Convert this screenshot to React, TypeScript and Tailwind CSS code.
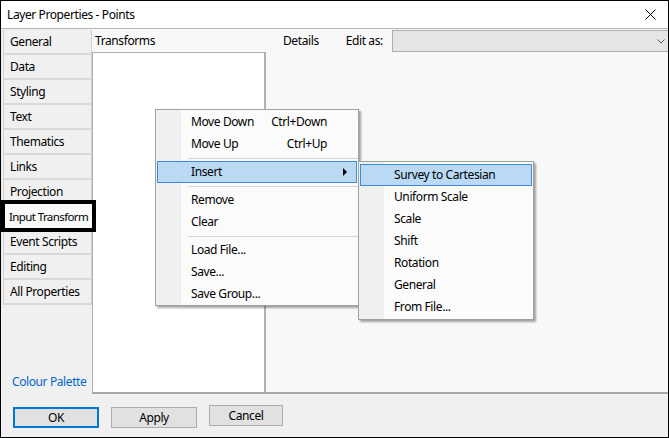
const tabs = [
  'General',
  'Data',
  'Styling',
  'Text',
  'Thematics',
  'Links',
  'Projection',
  'Input Transform',
  'Event Scripts',
  'Editing',
  'All Properties',
];

type MenuEntry = { label?: string; shortcut?: string; sep?: boolean; active?: boolean; sub?: boolean };

const mainMenu: MenuEntry[] = [
  { label: 'Move Down', shortcut: 'Ctrl+Down' },
  { label: 'Move Up', shortcut: 'Ctrl+Up' },
  { sep: true },
  { label: 'Insert', active: true, sub: true },
  { sep: true },
  { label: 'Remove' },
  { label: 'Clear' },
  { sep: true },
  { label: 'Load File...' },
  { label: 'Save...' },
  { label: 'Save Group...' },
];

const insertMenu = ['Survey to Cartesian', 'Uniform Scale', 'Scale', 'Shift', 'Rotation', 'General', 'From File...'];

const MenuRow = ({ item }: { item: MenuEntry }) => {
  if (item.sep) {
    return (
      <div className="h-[6px] flex items-center pl-[32px]">
        <div className="h-px w-full bg-[#d7d7d7]"></div>
      </div>
    );
  }
  return (
    <div
      className={`relative h-[22px] mx-[1px] flex items-center pl-[33px] pr-[29px] border ${
        item.active ? 'bg-[#b9d9f5] border-[#3d8ad6]' : 'border-transparent'
      }`}
    >
      <span className="flex-1">{item.label}</span>
      {item.shortcut && <span className="text-right">{item.shortcut}</span>}
      {item.sub && (
        <svg width="5" height="8" viewBox="0 0 5 8" className="absolute right-[8px] top-[6px]">
          <path d="M0 0 L4 4 L0 8 Z" fill="#000" />
        </svg>
      )}
    </div>
  );
};

export default function App() {
  return (
    <div
      className="w-[669px] h-[438px] border border-black bg-[#f0f0f0] flex flex-col relative overflow-hidden text-[12px] tracking-[-0.4px] text-black whitespace-nowrap"
      style={{ fontFamily: '"Noto Sans", "Open Sans", sans-serif' }}
    >
      {/* Title bar */}
      <div className="h-[27px] bg-white flex items-center justify-between pl-[6px] pr-[12px] shrink-0">
        <span>Layer Properties - Points</span>
        <svg width="11" height="11" viewBox="0 0 11 11">
          <path d="M0.5 0.5 L10.5 10.5 M10.5 0.5 L0.5 10.5" stroke="#000" strokeWidth="1" />
        </svg>
      </div>

      {/* Body */}
      <div className="flex flex-1 border-t border-[#b4b4b4] min-h-0">
        {/* Tab column */}
        <div className="w-[91px] flex flex-col pt-[1px] shrink-0">
          <div className="ml-[2px] border-l border-r border-[#d0d0d0]">
            {tabs.map((t) =>
              t === 'Input Transform' ? (
                <div key={t} className="relative h-[25px] flex items-center pl-[5px] border-b-2 border-[#d9d9d9]">
                  <div className="absolute -left-[3px] -right-[5px] -top-[5px] -bottom-[4px] border-[4px] border-black bg-[#f9f9f9]"></div>
                  <span className="relative text-[11.5px] tracking-[-0.6px]">{t}</span>
                </div>
              ) : (
                <div key={t} className="h-[25px] flex items-center pl-[6px] border-b-2 border-[#d9d9d9] bg-[#f0f0f0]">
                  {t}
                </div>
              ),
            )}
          </div>
          <div className="flex-1"></div>
          <div className="pl-[11px] pb-[3px] text-[#0066cc]">Colour Palette</div>
        </div>

        {/* Panel */}
        <div className="flex-1 flex bg-[#f8f8f8] border-b-2 border-[#a8a8a8]">
          <div className="w-[174px] flex flex-col shrink-0">
            <div className="h-[23px] flex items-center pl-[3px] bg-[#f8f8f8]">Transforms</div>
            <div className="flex-1 bg-white border-l border-t border-r-2 border-[#b0b0b0]"></div>
          </div>
          <div className="flex-1 flex flex-col">
            <div className="h-[23px] flex items-center pt-[1px]">
              <span className="ml-[17px]">Details</span>
              <span className="ml-[27px]">Edit as:</span>
              <div className="ml-[9px] flex-1 h-[22px] bg-[#e5e5e5] border border-[#adadad] border-r-0 flex items-center justify-end pr-[3px]">
                <svg width="8" height="5" viewBox="0 0 8 5">
                  <path d="M0.5 0.5 L4 4 L7.5 0.5" stroke="#555" strokeWidth="1" fill="none" />
                </svg>
              </div>
            </div>
          </div>
        </div>
      </div>

      {/* Footer */}
      <div className="h-[43px] shrink-0 flex items-start pt-[13px] pl-[12px]">
        <button className="w-[86px] h-[21px] bg-[#e1e1e1] border-2 border-[#0078d7] flex items-center justify-center">OK</button>
        <button className="ml-[12px] w-[86px] h-[21px] bg-[#e1e1e1] border border-[#adadad] flex items-center justify-center">Apply</button>
        <button className="ml-[12px] -mt-[2px] w-[74px] h-[21px] bg-[#e1e1e1] border border-[#adadad] flex items-center justify-center">Cancel</button>
      </div>

      {/* Context menu */}
      <div className="absolute left-[154px] top-[108px] w-[204px] bg-[#fbfbfb] border border-[#a0a0a0] shadow-[2px_2px_2px_rgba(0,0,0,0.35)] pt-[1px]">
        <div className="absolute left-0 top-0 bottom-0 w-[25px] bg-[#f0f0f0]"></div>
        <div className="relative">
          {mainMenu.map((m, i) => (
            <MenuRow key={i} item={m} />
          ))}
        </div>
      </div>

      {/* Insert submenu */}
      <div className="absolute left-[357px] top-[160px] w-[176px] bg-[#fbfbfb] border border-[#a0a0a0] shadow-[2px_2px_2px_rgba(0,0,0,0.35)] pt-[2px] pb-[1px]">
        <div className="absolute left-0 top-0 bottom-0 w-[25px] bg-[#f0f0f0]"></div>
        <div className="relative">
          {insertMenu.map((s, i) => (
            <div
              key={s}
              className={`h-[22px] mx-[1px] flex items-center pl-[33px] border ${
                i === 0 ? 'bg-[#b9d9f5] border-[#3d8ad6]' : 'border-transparent'
              }`}
            >
              {s}
            </div>
          ))}
        </div>
      </div>
    </div>
  );
}
